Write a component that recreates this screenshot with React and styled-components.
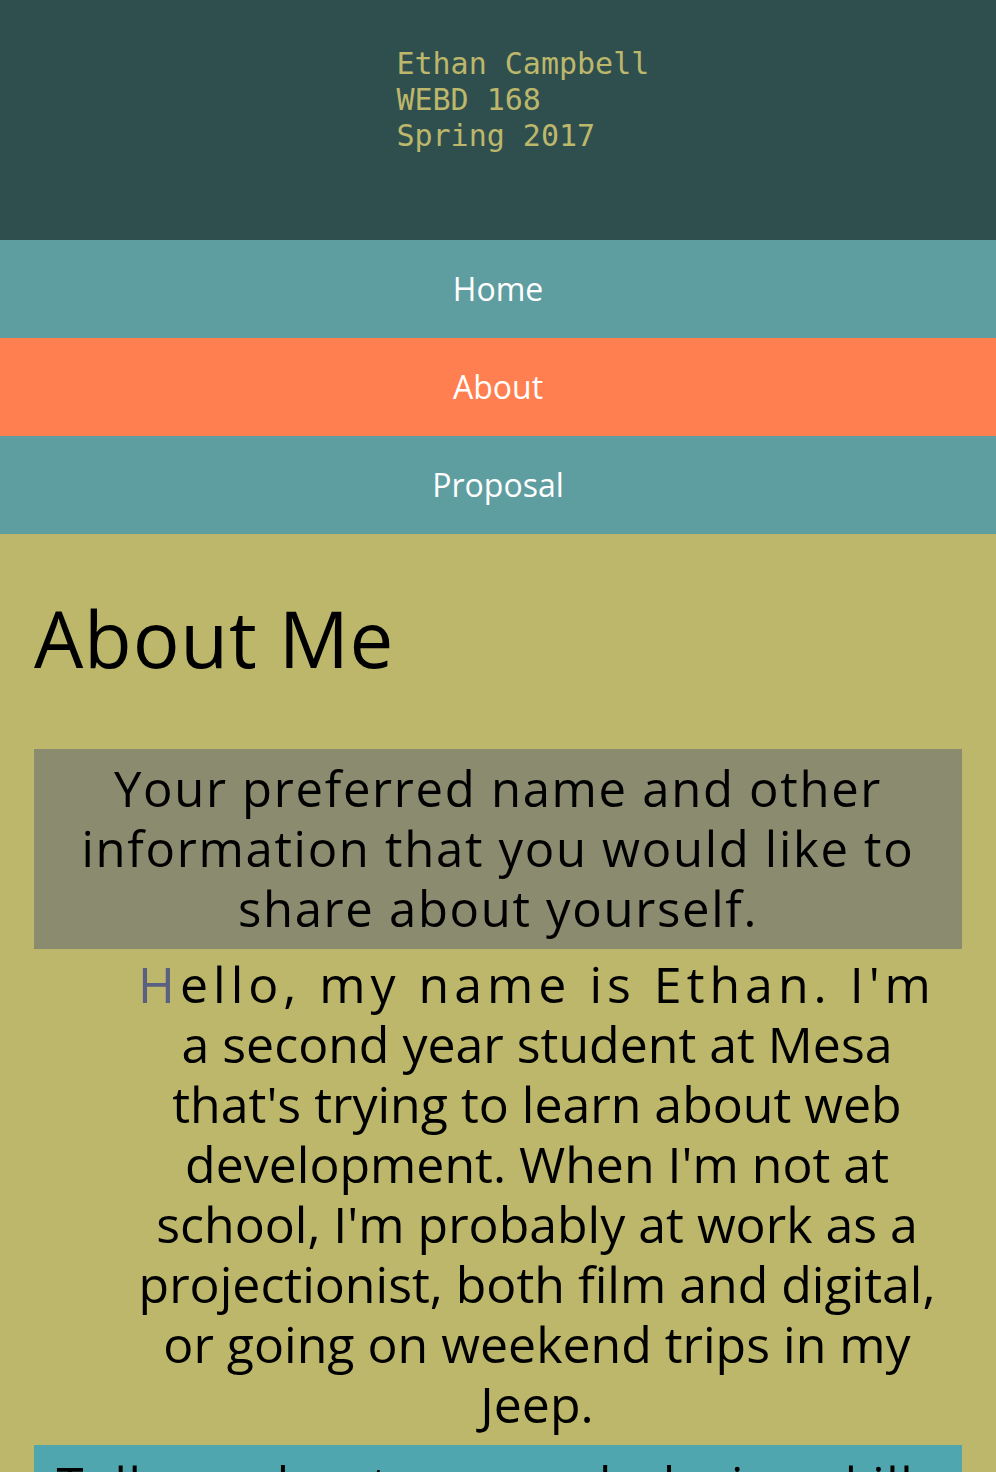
import React from "react";
import styled, { createGlobalStyle } from "styled-components";

const Global = createGlobalStyle`
  html, body { margin: 0; padding: 0; }
  body { background: #bdb76b; font-family: "Open Sans", "Liberation Sans", sans-serif; }
`;

const Header = styled.header`
  background: #2f4f4f;
  height: 240px;
  box-sizing: border-box;
  padding: 46px 0 0 calc(40% - 2px);
  font-family: "DejaVu Sans Mono", "Liberation Mono", monospace;
  font-size: 30px;
  line-height: 36px;
  color: #bdb76b;
`;

const HeaderLine = styled.div``;

const Nav = styled.nav`
  display: flex;
  flex-direction: column;
`;

const NavItem = styled.a`
  display: flex;
  align-items: center;
  justify-content: center;
  height: 98px;
  background: ${(p) => (p.$active ? "#ff7f50" : "#5f9ea0")};
  color: #fff;
  font-size: 32px;
  text-decoration: none;
  padding-bottom: 2px;
  box-sizing: border-box;
`;

const Main = styled.main`
  padding: 0 34px;
  display: flex;
  flex-direction: column;
`;

const Title = styled.h1`
  font-size: 78px;
  font-weight: 400;
  line-height: 94px;
  letter-spacing: 0.8px;
  margin: 57px 0 64px 0;
  color: #000;
`;

const Prompt = styled.h2`
  margin: 0;
  background: ${(p) => p.$bg};
  padding: 9px 10px 11px;
  font-size: 49px;
  font-weight: 400;
  line-height: 60px;
  letter-spacing: 1.7px;
  text-align: center;
  color: #000;
`;

const Para = styled.p`
  margin: 5px 15px 11px 93px;
  font-size: 50px;
  line-height: 60px;
  text-align: center;
  color: #000;
  &::first-line {
    letter-spacing: 5px;
  }
  &::first-letter {
    color: #5a6180;
  }
`;

export default function App() {
  return (
    <>
      <Global />
      <Header>
        <HeaderLine>Ethan Campbell</HeaderLine>
        <HeaderLine>WEBD 168</HeaderLine>
        <HeaderLine>Spring 2017</HeaderLine>
      </Header>
      <Nav>
        <NavItem href="#">Home</NavItem>
        <NavItem href="#" $active>
          About
        </NavItem>
        <NavItem href="#">Proposal</NavItem>
      </Nav>
      <Main>
        <Title>About Me</Title>
        <Prompt $bg="#8b8b6f">
          Your preferred name and other information that you would like to
          share about yourself.
        </Prompt>
        <Para>
          Hello, my name is Ethan. I'm a second year student at Mesa that's
          trying to learn about web development. When I'm not at school, I'm
          probably at work as a projectionist, both film and digital, or going
          on weekend trips in my Jeep.
        </Para>
        <Prompt $bg="#50a6ae">
          Tell me about your web design skills and experience.
        </Prompt>
      </Main>
    </>
  );
}
